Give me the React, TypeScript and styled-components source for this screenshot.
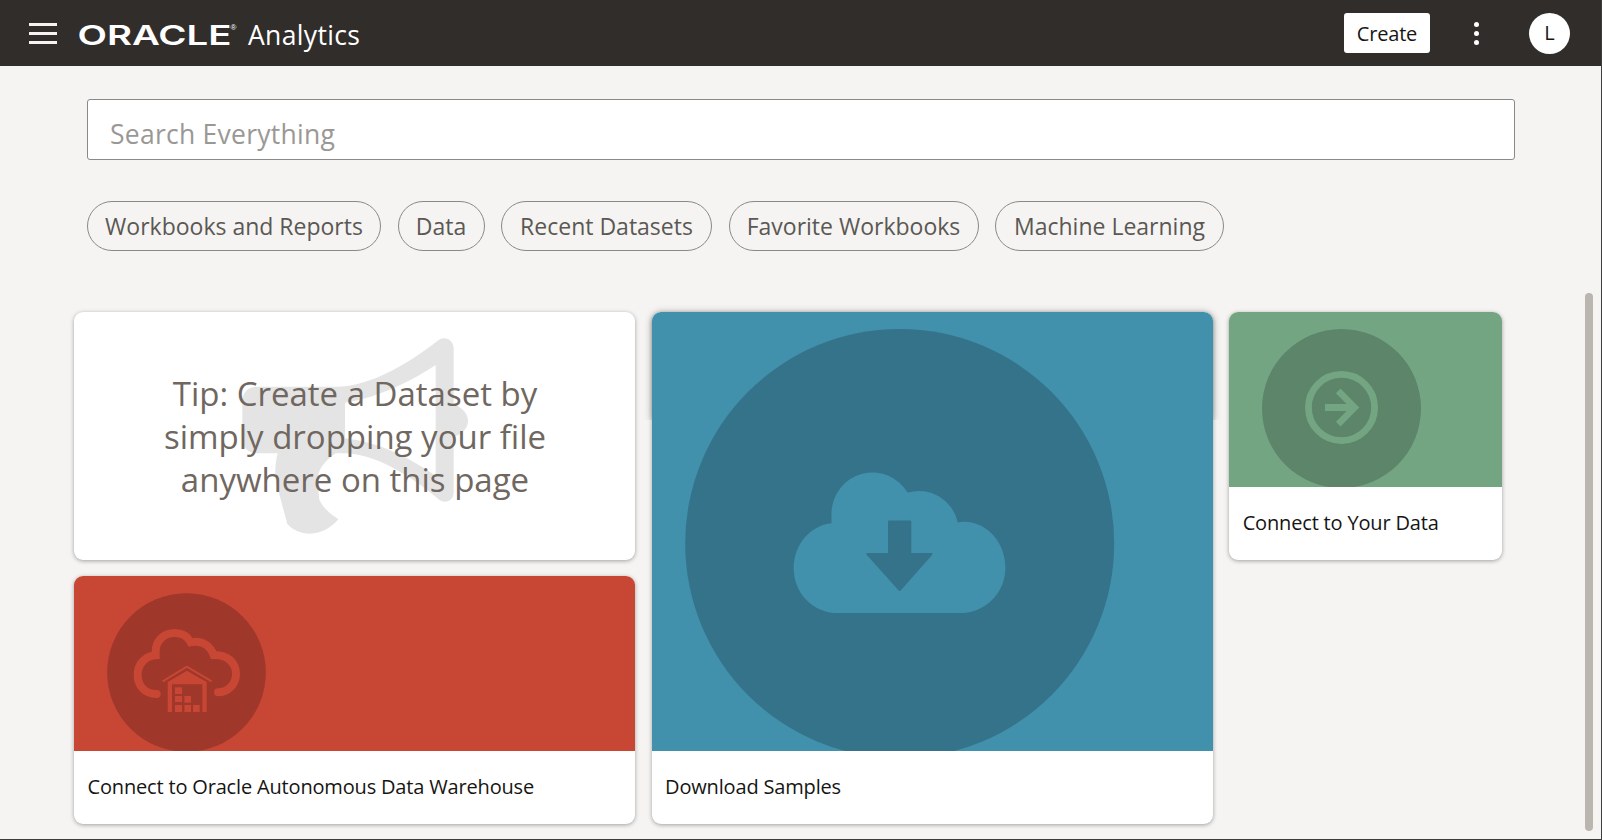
import React from 'react';
import styled, { createGlobalStyle } from 'styled-components';

const Global = createGlobalStyle`
  * { box-sizing: border-box; }
  html, body { margin: 0; background: #f5f4f2; }
  body { font-family: "Open Sans", "Noto Sans", sans-serif; color: #161513; overflow: hidden; }
`;

const Window = styled.div`
  width: 1602px;
  height: 840px;
  background: #f5f4f2;
  border-right: 1px solid #3d3d3f;
  border-bottom: 1px solid #3d3d3f;
  display: flex;
  flex-direction: column;
  position: relative;
  overflow: hidden;
`;

const Header = styled.header`
  height: 66px;
  flex: none;
  background: #312d2a;
  display: flex;
  align-items: center;
  padding: 0 31px 0 29px;
`;

const MenuButton = styled.div`
  width: 28px;
  height: 21px;
  display: flex;
  flex-direction: column;
  justify-content: space-between;
  margin: 1px 16px 0 0;
`;

const MenuBar = styled.span`
  height: 3px;
  background: #f5f4f2;
`;

const Logo = styled.svg`
  width: 166px;
  height: 42px;
  flex: none;
  fill: #fff;
  overflow: visible;
`;

const Product = styled.div`
  margin-left: 9px;
  flex: 1;
  padding-top: 3px;
  color: #fff;
  font-size: 26.5px;
  line-height: 36px;
  letter-spacing: 0.35px;
`;

const CreateButton = styled.button`
  width: 86px;
  height: 40px;
  border: 0;
  border-radius: 3px;
  background: #fff;
  padding: 0;
  font: 20px "Open Sans", sans-serif;
  color: #161513;
  letter-spacing: -0.2px;
`;

const Dots = styled.div`
  display: flex;
  flex-direction: column;
  gap: 4px;
  margin: 0 50px 0 44px;

  span {
    width: 5px;
    height: 5px;
    border-radius: 50%;
    background: #fff;
  }
`;

const Avatar = styled.div`
  width: 41px;
  height: 41px;
  border-radius: 50%;
  background: #fff;
  display: flex;
  align-items: center;
  justify-content: center;
  font-size: 20px;
  padding-bottom: 2px;
`;

const Search = styled.div`
  margin: 33px 86px 0 87px;
  height: 61px;
  flex: none;
  border: 1px solid #8b8986;
  border-radius: 3px;
  background: #fff;
  padding: 8px 22px 0;
  display: flex;
  align-items: center;
  font-size: 26.5px;
  color: #9a9895;
  letter-spacing: 0.25px;
`;

const Chips = styled.nav`
  display: flex;
  gap: 16.5px;
  margin: 41px 0 0 87px;
  flex: none;
`;

const Chip = styled.div<{ $width: number }>`
  width: ${p => p.$width}px;
  height: 50px;
  border: 1px solid #8b8986;
  border-radius: 25px;
  display: flex;
  align-items: center;
  justify-content: center;
  font-size: 23px;
  color: #5b5854;
  white-space: nowrap;
`;

const Grid = styled.main`
  display: grid;
  grid-template-columns: 561px 561px 273px;
  grid-template-rows: 248px 248px;
  gap: 16px 16.6px;
  margin: 61px 0 0 74px;
`;

const Card = styled.section`
  background: #fff;
  border-radius: 9px;
  box-shadow: 0 1px 4px rgba(0, 0, 0, 0.35);
  display: flex;
  flex-direction: column;
  overflow: hidden;
`;

const FeatureSlot = styled.div`
  grid-row: span 2;
  position: relative;
  display: grid;

  &::before {
    content: '';
    position: absolute;
    inset: 0 0 auto;
    height: 108px;
    border-radius: 9px 9px 0 0;
    box-shadow: 0 1px 8px rgba(0, 0, 0, 0.28);
    clip-path: inset(-8px -8px 0);
  }

  > * {
    position: relative;
  }
`;

const TipCard = styled(Card)`
  display: grid;

  > * {
    grid-area: 1 / 1;
  }
`;

const TipText = styled.p`
  margin: 0;
  padding: 1px 0 0 1px;
  align-self: center;
  z-index: 1;
  text-align: center;
  white-space: pre-line;
  font-size: 33px;
  line-height: 43px;
  color: #6f6760;
`;

const Banner = styled.div<{ $color: string }>`
  flex: 1;
  min-height: 0;
  background: ${p => p.$color};
`;

const Art = styled.svg`
  display: block;
`;

const Caption = styled.div`
  height: 73px;
  flex: none;
  display: flex;
  align-items: center;
  padding: 0 13.5px 2px;
  font-size: 20px;
  letter-spacing: -0.17px;
  white-space: nowrap;
`;

const Scrollbar = styled.div`
  position: absolute;
  left: 1585px;
  top: 293px;
  width: 8px;
  height: 538px;
  border-radius: 4px;
  background: #bbb5b0;
`;

const OracleLogo = () => (
  <Logo viewBox="73 12 166 42">
    <text x="77.5" y="44.500" fontFamily="Inter, sans-serif" fontWeight="600" fontSize="27.500" textLength="154" lengthAdjust="spacingAndGlyphs">
      ORACLE
    </text>
    <text x="230.5" y="30" fontFamily="Liberation Sans, sans-serif" fontSize="8">
      ®
    </text>
  </Logo>
);

const Megaphone = () => (
  <Art width="561" height="248" viewBox="-228 -39 1683 744">
    <path
      fill="#e4e4e4"
      fillRule="evenodd"
      d="M322 185H565C660 183 770 120 862 48C882 30 911 44 911 70V238C940 250 954 268 954 288C954 310 935 328 911 336V502C911 530 882 538 865 522C780 450 670 385 583 385H557C520 412 502 435 502 472L508 524C522 552 540 566 565 583C540 612 510 626 480 626C450 626 428 614 412 597L380 478C374 455 374 420 383 385H322C294 385 277 368 277 340V230C277 202 294 185 322 185ZM585 233C690 217 790 165 857 120V452C770 393 680 350 585 340Z"
    />
  </Art>
);

const WarehouseArt = () => (
  <Art width="561" height="175" viewBox="-153 -132 1683 525">
    <circle cx="184.5" cy="157.5" r="238" fill="#9f372a" />
    <path
      fill="none"
      stroke="#c74634"
      strokeWidth="24"
      strokeLinecap="round"
      d="M95 222C60 222 38 197 38 164C38 131 62 108 92 106V95C92 60 118 39 149 39C172 39 189 51 197 67C232 60 256 78 266 105C308 104 333 128 333 162C333 194 308 217 279 217"
    />
    <path fill="none" stroke="#c74634" strokeWidth="6" d="M113 184L185.500 140L260 184" />
    <path
      fill="#c74634"
      fillRule="evenodd"
      d="M128 186L186 152L245 186V276H232V193H141V276H128ZM150 202h21v20h-21zM150 228h21v18h-21zM178 228h20v20h-20zM150 255h21v21h-21zM178 255h20v21h-20zM204 255h20v21h-20z"
    />
  </Art>
);

const DownloadArt = () => (
  <Art width="561" height="439" viewBox="0 0 561 439">
    <circle cx="247.700" cy="231.500" r="214.500" fill="#35738b" />
    <path
      fill="#4190ac"
      d="M182 301C159 299 141.700 280 141.700 256.300C141.700 233 158 213.500 179.500 211.300V200.500A41 41.500 0 0 1 255.600 180.500A40 40 0 0 1 305.800 210.400C332 206 353.400 229 353.400 255.500C353.400 280 335 299 312 301Z"
    />
    <path
      fill="#35738b"
      stroke="#35738b"
      strokeWidth="2"
      strokeLinejoin="round"
      d="M237 209.500H258.300V242H279.500L247.700 278L215.300 242H237Z"
    />
  </Art>
);

const ConnectArt = () => (
  <Art width="273" height="175" viewBox="0 0 273 175">
    <circle cx="112.500" cy="96.500" r="79.500" fill="#5c8569" />
    <g fill="none" stroke="#74a583">
      <circle cx="112.500" cy="95.500" r="33.100" strokeWidth="6.800" />
      <path strokeWidth="7" d="M96 95.500H126" />
      <path strokeWidth="6.500" d="M109.200 78.900L125.700 95.500L109.200 112.100" />
    </g>
  </Art>
);

const chips = [
  { label: 'Workbooks and Reports', width: 294 },
  { label: 'Data', width: 87 },
  { label: 'Recent Datasets', width: 211 },
  { label: 'Favorite Workbooks', width: 250 },
  { label: 'Machine Learning', width: 229 },
];

const App = () => (
  <>
    <Global />
    <Window>
      <Header>
        <MenuButton>
          <MenuBar />
          <MenuBar />
          <MenuBar />
        </MenuButton>
        <OracleLogo />
        <Product>Analytics</Product>
        <CreateButton>Create</CreateButton>
        <Dots>
          <span />
          <span />
          <span />
        </Dots>
        <Avatar>L</Avatar>
      </Header>
      <Search>Search Everything</Search>
      <Chips>
        {chips.map(chip => (
          <Chip key={chip.label} $width={chip.width}>
            {chip.label}
          </Chip>
        ))}
      </Chips>
      <Grid>
        <TipCard>
          <Megaphone />
          <TipText>{'Tip: Create a Dataset by\nsimply dropping your file\nanywhere on this page'}</TipText>
        </TipCard>
        <FeatureSlot>
          <Card>
            <Banner $color="#4190ac">
              <DownloadArt />
            </Banner>
            <Caption>Download Samples</Caption>
          </Card>
        </FeatureSlot>
        <Card>
          <Banner $color="#74a583">
            <ConnectArt />
          </Banner>
          <Caption>Connect to Your Data</Caption>
        </Card>
        <Card>
          <Banner $color="#c74634">
            <WarehouseArt />
          </Banner>
          <Caption>Connect to Oracle Autonomous Data Warehouse</Caption>
        </Card>
      </Grid>
      <Scrollbar />
    </Window>
  </>
);

export default App;
